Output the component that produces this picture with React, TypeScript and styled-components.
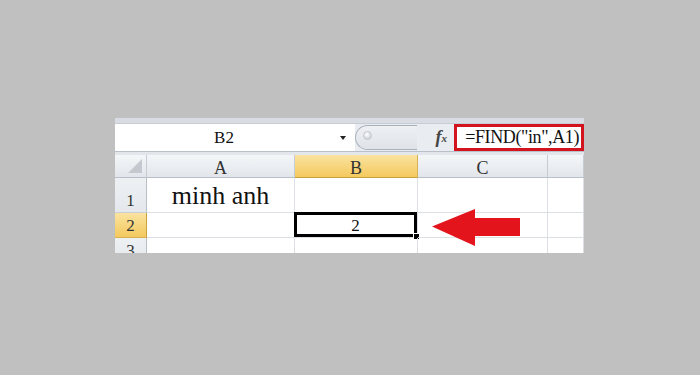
import styled, { createGlobalStyle } from "styled-components"

const GlobalStyle = createGlobalStyle`
  html, body {
    margin: 0;
    padding: 0;
    background: #c0c0c0;
  }
  body {
    font-family: "Liberation Serif", "Times New Roman", serif;
  }
`

const Page = styled.div`
  width: 700px;
  height: 375px;
  box-sizing: border-box;
  padding: 118px 0 0 115px;
  background: #c0c0c0;
  overflow: hidden;
`

const Panel = styled.div`
  width: 469px;
  height: 135px;
  background: #dde1e6;
  overflow: hidden;
  display: flex;
  flex-direction: column;

  & > * {
    flex-shrink: 0;
  }
`

const TopStrip = styled.div`
  height: 5px;
  background: #d9dde3;
  border-bottom: 1px solid #c7cdd5;
`

const FormulaRow = styled.div`
  height: 27px;
  display: flex;
  align-items: stretch;
  background: #e9ecf0;
`

const NameBox = styled.div`
  width: 240px;
  background: #ffffff;
  display: flex;
  align-items: center;
`

const NameText = styled.span`
  width: 218px;
  text-align: center;
  font-size: 17px;
  color: #111;
`

const DropArrow = styled.span`
  margin-left: 7px;
  width: 0;
  height: 0;
  border-left: 3.5px solid transparent;
  border-right: 3.5px solid transparent;
  border-top: 4px solid #222;
`

const ButtonWell = styled.div`
  margin: 1px 0;
  width: 62px;
  border: 1px solid #a9b0ba;
  border-right: none;
  border-radius: 13px 0 0 13px;
  background: linear-gradient(#eef0f3, #dfe3e8);
  display: flex;
  align-items: flex-start;
  padding: 5px 0 0 7px;
  box-sizing: border-box;
`

const Dot = styled.span`
  width: 7px;
  height: 7px;
  border-radius: 50%;
  background: radial-gradient(circle at 40% 35%, #ffffff, #bfc4cb);
  border: 1px solid #c3c8cf;
`

const FxLabel = styled.div`
  width: 37px;
  display: flex;
  align-items: center;
  justify-content: flex-end;
  padding-right: 7px;
  box-sizing: border-box;
  font-style: italic;
  font-weight: bold;
  font-size: 18px;
  color: #444;

  sub {
    font-size: 11px;
    vertical-align: -1px;
  }
`

const FormulaInput = styled.div`
  flex: 1;
  background: #ffffff;
  border: 3px solid #d3141f;
  display: flex;
  align-items: center;
  justify-content: flex-end;
  padding-right: 2px;
  font-size: 18px;
  letter-spacing: -0.4px;
  color: #111;
`

const Divider = styled.div`
  height: 4px;
  background: #e3e6ea;
  border-top: 1px solid #b9c0c9;
  box-sizing: border-box;
`

const GridWrap = styled.div`
  position: relative;
  height: 98px;
  overflow: hidden;
  background: #ffffff;
`

const Grid = styled.div`
  display: grid;
  grid-template-columns: 32px 148px 123px 130px 1fr;
  grid-template-rows: 23px 35px 25px 25px;
`

const Corner = styled.div`
  background: linear-gradient(#f4f6f8, #e2e6eb);
  border-right: 1px solid #c6ccd4;
  border-bottom: 1px solid #b8bfc9;
  display: flex;
  align-items: flex-end;
  justify-content: flex-end;
  padding: 0 4px 4px 0;
`

const CornerMark = styled.span`
  width: 0;
  height: 0;
  border-left: 14px solid transparent;
  border-bottom: 14px solid #c4c9cf;
`

const ColHeader = styled.div<{ $active?: boolean }>`
  background: ${({ $active }) =>
    $active
      ? "linear-gradient(#fae3a0, #f4c95e)"
      : "linear-gradient(#f4f6f8, #e2e6eb)"};
  border-right: 1px solid ${({ $active }) => ($active ? "#d7b253" : "#c6ccd4")};
  border-bottom: 1px solid ${({ $active }) => ($active ? "#c9a43d" : "#b8bfc9")};
  text-align: center;
  font-size: 18px;
  line-height: 20px;
  padding-top: 3px;
  box-sizing: border-box;
  color: #333;
`

const RowHeader = styled.div<{ $active?: boolean; $clip?: boolean }>`
  background: ${({ $active }) =>
    $active
      ? "linear-gradient(#fae3a0, #f4c95e)"
      : "linear-gradient(#eef1f4, #e4e8ec)"};
  border-right: 1px solid ${({ $active }) => ($active ? "#c9a43d" : "#b8bfc9")};
  border-bottom: 1px solid ${({ $active }) => ($active ? "#d7b253" : "#c9ced6")};
  display: flex;
  justify-content: center;
  align-items: ${({ $clip }) => ($clip ? "flex-start" : "flex-end")};
  padding: ${({ $clip }) => ($clip ? "3px 0 0" : "0 0 1px")};
  font-size: 17px;
  line-height: 20px;
  color: #333;
`

const Cell = styled.div<{ $big?: boolean; $selected?: boolean }>`
  position: relative;
  border-right: 1px solid #dcdfe3;
  border-bottom: 1px solid #dcdfe3;
  display: flex;
  justify-content: center;
  align-items: flex-end;
  padding-bottom: 1px;
  font-size: ${({ $big }) => ($big ? "26px" : "17px")};
  line-height: ${({ $big }) => ($big ? "30px" : "20px")};
  color: #111;
  box-shadow: ${({ $selected }) => ($selected ? "inset 0 0 0 3px #000" : "none")};
  margin: ${({ $selected }) => ($selected ? "-1px 0 0 -1px" : "0")};
`

const FillHandle = styled.span`
  position: absolute;
  right: -3px;
  bottom: -3px;
  width: 5px;
  height: 5px;
  background: #000;
  border: 1px solid #fff;
`

const ArrowMark = styled.svg`
  position: absolute;
  left: 317px;
  top: 54px;
  width: 88px;
  height: 37px;
`

export default function App() {
  return (
    <>
      <GlobalStyle />
      <Page>
        <Panel>
          <TopStrip />
          <FormulaRow>
            <NameBox>
              <NameText>B2</NameText>
              <DropArrow />
            </NameBox>
            <ButtonWell>
              <Dot />
            </ButtonWell>
            <FxLabel>
              f<sub>x</sub>
            </FxLabel>
            <FormulaInput>=FIND("in",A1)</FormulaInput>
          </FormulaRow>
          <Divider />
          <GridWrap>
            <Grid>
              <Corner>
                <CornerMark />
              </Corner>
              <ColHeader>A</ColHeader>
              <ColHeader $active>B</ColHeader>
              <ColHeader>C</ColHeader>
              <ColHeader />

              <RowHeader>1</RowHeader>
              <Cell $big>minh anh</Cell>
              <Cell />
              <Cell />
              <Cell />

              <RowHeader $active>2</RowHeader>
              <Cell />
              <Cell $selected>
                2
                <FillHandle />
              </Cell>
              <Cell />
              <Cell />

              <RowHeader $clip>3</RowHeader>
              <Cell />
              <Cell />
              <Cell />
              <Cell />
            </Grid>
            <ArrowMark viewBox="0 0 88 37">
              <polygon
                points="0,17.5 43,0 43,9 88,9 88,27 43,27 43,37"
                fill="#e3141b"
              />
            </ArrowMark>
          </GridWrap>
        </Panel>
      </Page>
    </>
  )
}
